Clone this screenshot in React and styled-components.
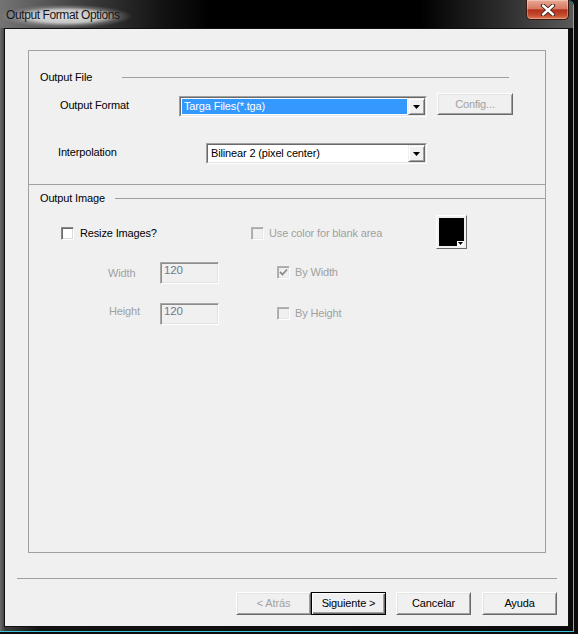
import React from "react";
import styled, { createGlobalStyle, css } from "styled-components";

const GlobalStyle = createGlobalStyle`
  html, body { margin: 0; padding: 0; background: #0b0b0b; }
  body {
    font-family: "Liberation Sans", Arial, sans-serif;
    font-size: 11px;
    letter-spacing: -0.15px;
  }
`;

// window chrome
const Window = styled.div`
  width: 578px;
  height: 634px;
  box-sizing: border-box;
  padding: 0 4px 2px 0;
  background: #0b0b0b;
  display: flex;
`;

const Glass = styled.div`
  flex: 1;
  display: flex;
  flex-direction: column;
  border-right: 1px solid #3cc4dc;
  border-bottom: 1px solid #3cc4dc;
  border-top-right-radius: 6px;
  background: linear-gradient(90deg, #6b6b6b 0, #3c3c3c 5px, #121212 40px, #0a0a0a 100%);
`;

const TitleBar = styled.div`
  height: 28px;
  flex-shrink: 0;
  display: flex;
  align-items: flex-start;
  justify-content: space-between;
  border-top-right-radius: 6px;
  background: linear-gradient(90deg, #747474 0, #3a3a3a 90px, #141414 160px, #000 210px, #000 420px, #2e2e2e 505px, #5a5a5a 100%);
`;

const Title = styled.div`
  margin-top: 2px;
  height: 26px;
  padding: 0 30px 0 6px;
  display: flex;
  align-items: center;
  font-size: 12px;
  letter-spacing: -0.4px;
  color: #151515;
  background: radial-gradient(closest-side at 44% 55%, rgba(232,232,232,.95) 0%, rgba(218,218,218,.85) 55%, rgba(170,170,170,.35) 80%, rgba(120,120,120,0) 100%);
`;

const CloseButton = styled.div`
  width: 43px;
  height: 20px;
  margin-right: 4px;
  box-sizing: border-box;
  border: 1px solid #3b1810;
  border-top: none;
  border-radius: 0 0 5px 5px;
  background: linear-gradient(180deg, #eaa894 0%, #d67a62 45%, #b3321c 52%, #c44a2e 80%, #df7a52 100%);
  box-shadow: inset 0 0 0 1px rgba(255, 255, 255, 0.3);
  display: flex;
  align-items: center;
  justify-content: center;
`;

const Body = styled.div`
  flex: 1;
  display: flex;
  padding: 0 4px 4px 4px;
`;

const Client = styled.div`
  flex: 1;
  border: 1px solid #111;
  background: #f0f0f0;
  display: flex;
  flex-direction: column;
`;

// panel with groups
const Panel = styled.div`
  margin: 21px 22px 0 23px;
  height: 503px;
  box-sizing: border-box;
  border: 1px solid #a0a0a0;
  display: flex;
  flex-direction: column;
`;

const GroupHeader = styled.div`
  display: flex;
  align-items: center;
  height: 13px;
  padding-left: 11px;
  margin-top: ${(p) => p.$mt}px;
  margin-right: ${(p) => p.$endGap}px;
`;

const GroupLabel = styled.span`
  width: ${(p) => p.$w}px;
  flex-shrink: 0;
  line-height: 13px;
  color: #000;
`;

const GroupLine = styled.div`
  flex: 1;
  height: 1px;
  background: #a0a0a0;
`;

const Divider = styled.div`
  margin-top: ${(p) => p.$mt}px;
  height: 1px;
  background: #a0a0a0;
`;

const Row = styled.div`
  display: flex;
  align-items: flex-start;
  margin-top: ${(p) => p.$mt}px;
  padding-left: ${(p) => p.$pl}px;
`;

const Label = styled.span`
  width: ${(p) => p.$w}px;
  flex-shrink: 0;
  margin-top: ${(p) => p.$mt || 0}px;
  line-height: 13px;
  color: ${(p) => (p.$disabled ? "#a0a0a0" : "#000")};
`;

// combo box
const Combo = styled.div`
  width: ${(p) => p.$w}px;
  height: 21px;
  margin-top: ${(p) => p.$mt || 0}px;
  box-sizing: border-box;
  flex-shrink: 0;
  display: flex;
  border: 1px solid;
  border-color: #a0a0a0 #fff #fff #a0a0a0;
`;

const ComboInner = styled.div`
  flex: 1;
  display: flex;
  border: 1px solid;
  border-color: #696969 #e3e3e3 #e3e3e3 #696969;
  background: #fff;
`;

const ComboValue = styled.div`
  flex: 1;
  padding: 1px;
  display: flex;
`;

const ComboText = styled.span`
  flex: 1;
  padding-left: 2px;
  line-height: 15px;
  white-space: nowrap;
  overflow: hidden;
  ${(p) =>
    p.$selected
      ? css`
          background: #3399ff;
          color: #fff;
        `
      : css`
          color: #000;
        `}
`;

const ArrowButton = styled.div`
  width: 17px;
  box-sizing: border-box;
  background: #f0f0f0;
  border: 1px solid;
  border-color: #f0f0f0 #696969 #696969 #f0f0f0;
  box-shadow: inset 1px 1px #fff, inset -1px -1px #a0a0a0;
  display: flex;
  align-items: center;
  justify-content: center;
`;

// push buttons
const Button = styled.div`
  width: ${(p) => p.$w || 75}px;
  height: ${(p) => p.$h || 23}px;
  margin-left: ${(p) => p.$ml || 0}px;
  box-sizing: border-box;
  flex-shrink: 0;
  display: flex;
  align-items: center;
  justify-content: center;
  background: #f0f0f0;
  border: 1px solid;
  border-color: #fff #696969 #696969 #fff;
  box-shadow: inset 1px 1px #e3e3e3, inset -1px -1px #a0a0a0;
  line-height: 13px;
  color: ${(p) => (p.$disabled ? "#a0a0a0" : "#000")};
  ${(p) =>
    p.$default &&
    css`
      border-color: #000;
      box-shadow: inset 1px 1px #fff, inset -1px -1px #696969, inset -2px -2px #a0a0a0;
    `}
`;

// check boxes
const CheckItem = styled.div`
  width: ${(p) => p.$w}px;
  margin-left: ${(p) => p.$ml || 0}px;
  margin-top: ${(p) => p.$mt || 0}px;
  flex-shrink: 0;
  display: flex;
  align-items: center;
  height: 13px;
`;

const Box = styled.span`
  width: 13px;
  height: 13px;
  box-sizing: border-box;
  flex-shrink: 0;
  border: 1px solid;
  display: flex;
  align-items: center;
  justify-content: center;
  ${(p) =>
    p.$disabled
      ? css`
          border-color: #b4b4b4 #fff #fff #b4b4b4;
          box-shadow: inset 1px 1px #a8a8a8, inset -1px -1px #e8e8e8;
          background: #f0f0f0;
        `
      : css`
          border-color: #8a8a8a #fff #fff #8a8a8a;
          box-shadow: inset 1px 1px #6a6a6a, inset -1px -1px #dcdcdc;
          background: #fff;
        `}
`;

const CheckText = styled.span`
  margin-left: ${(p) => p.$gap || 5}px;
  line-height: 13px;
  white-space: nowrap;
  color: ${(p) => (p.$disabled ? "#a0a0a0" : "#000")};
`;

// text field
const Field = styled.div`
  width: 59px;
  height: 22px;
  box-sizing: border-box;
  flex-shrink: 0;
  border: 1px solid;
  border-color: #a8a8a8 #fff #fff #a8a8a8;
  box-shadow: inset 1px 1px #8c8c8c, inset -1px -1px #e3e3e3;
  background: #f0f0f0;
  color: #6f7888;
  padding: 1px 0 0 3px;
  font-size: 11.5px;
  line-height: 13px;
`;

// colour picker
const Swatch = styled.div`
  width: 31px;
  height: 34px;
  box-sizing: border-box;
  flex-shrink: 0;
  padding: 2px;
  display: flex;
  background: #f0f0f0;
  border: 1px solid;
  border-color: #fff #696969 #696969 #fff;
`;

const SwatchFill = styled.div`
  flex: 1;
  background: #000;
  display: flex;
  align-items: flex-end;
  justify-content: flex-end;
`;

const SwatchArrow = styled.span`
  width: 7px;
  height: 5px;
  background: #fff;
  display: flex;
  align-items: center;
  justify-content: center;
`;

// footer
const Separator = styled.div`
  margin: 25px 11px 0 12px;
  height: 1px;
  background: #a0a0a0;
`;

const ButtonRow = styled.div`
  display: flex;
  justify-content: flex-end;
  margin-top: 13px;
  padding-right: 11px;
`;

const Triangle = ({ w = 7, h = 4 }) => (
  <svg width={w} height={h} viewBox={`0 0 ${w} ${h}`}>
    <polygon points={`0,0 ${w},0 ${w / 2},${h}`} fill="#000" />
  </svg>
);

const Check = () => (
  <svg width="9" height="9" viewBox="0 0 9 9">
    <path d="M1 4 L3.5 6.5 L8 1.5" fill="none" stroke="#8c8c8c" strokeWidth="1.8" />
  </svg>
);

const CloseX = () => (
  <svg width="16" height="12" viewBox="0 0 16 12">
    <path d="M3 1.5 L13 10.5 M13 1.5 L3 10.5" stroke="#3a1a12" strokeWidth="4.2" strokeLinecap="round" />
    <path d="M3 1.5 L13 10.5 M13 1.5 L3 10.5" stroke="#fff" strokeWidth="2.4" strokeLinecap="round" />
  </svg>
);

const ComboBox = ({ w, mt, value, selected }) => (
  <Combo $w={w} $mt={mt}>
    <ComboInner>
      <ComboValue>
        <ComboText $selected={selected}>{value}</ComboText>
      </ComboValue>
      <ArrowButton>
        <Triangle />
      </ArrowButton>
    </ComboInner>
  </Combo>
);

const CheckBox = ({ w, ml, mt, label, disabled, checked, gap }) => (
  <CheckItem $w={w} $ml={ml} $mt={mt}>
    <Box $disabled={disabled}>{checked && <Check />}</Box>
    <CheckText $disabled={disabled} $gap={gap}>
      {label}
    </CheckText>
  </CheckItem>
);

export default function App() {
  return (
    <>
      <GlobalStyle />
      <Window>
        <Glass>
          <TitleBar>
            <Title>Output Format Options</Title>
            <CloseButton>
              <CloseX />
            </CloseButton>
          </TitleBar>
          <Body>
            <Client>
              <Panel>
                <GroupHeader $mt={20} $endGap={36}>
                  <GroupLabel $w={82}>Output File</GroupLabel>
                  <GroupLine />
                </GroupHeader>

                <Row $mt={9} $pl={31}>
                  <Label $w={119} $mt={6}>Output Format</Label>
                  <ComboBox w={248} mt={3} value="Targa Files(*.tga)" selected />
                  <Button $w={76} $h={22} $ml={10} $disabled>
                    Config...
                  </Button>
                </Row>

                <Row $mt={26} $pl={29}>
                  <Label $w={148} $mt={3}>Interpolation</Label>
                  <ComboBox w={221} value="Bilinear 2 (pixel center)" />
                </Row>

                <Divider $mt={20} />

                <GroupHeader $mt={7} $endGap={0}>
                  <GroupLabel $w={75}>Output Image</GroupLabel>
                  <GroupLine />
                </GroupHeader>

                <Row $mt={10} $pl={32}>
                  <CheckBox w={190} mt={12} label="Resize Images?" gap={6} />
                  <CheckBox w={185} mt={12} label="Use color for blank area" disabled />
                  <Swatch>
                    <SwatchFill>
                      <SwatchArrow>
                        <Triangle w={5} h={3} />
                      </SwatchArrow>
                    </SwatchFill>
                  </Swatch>
                </Row>

                <Row $mt={13} $pl={79}>
                  <Label $w={52} $mt={5} $disabled>Width</Label>
                  <Field>120</Field>
                  <CheckBox w={120} ml={58} mt={4} label="By Width" disabled checked />
                </Row>

                <Row $mt={19} $pl={80}>
                  <Label $w={51} $mt={2} $disabled>Height</Label>
                  <Field>120</Field>
                  <CheckBox w={120} ml={58} mt={4} label="By Height" disabled />
                </Row>
              </Panel>

              <Separator />
              <ButtonRow>
                <Button $disabled>&lt; Atrás</Button>
                <Button $default $ml={0}>Siguiente &gt;</Button>
                <Button $ml={10}>Cancelar</Button>
                <Button $ml={11}>Ayuda</Button>
              </ButtonRow>
            </Client>
          </Body>
        </Glass>
      </Window>
    </>
  );
}
